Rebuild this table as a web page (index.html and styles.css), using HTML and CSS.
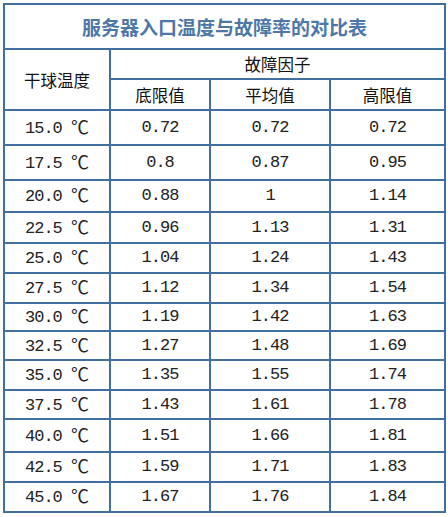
FILE: index.html
```html
<!DOCTYPE html>
<html lang="zh">
<head>
<meta charset="utf-8">
<title>服务器入口温度与故障率的对比表</title>
<link rel="stylesheet" href="styles.css">
</head>
<body>
<div class="sheet">
  <div class="cell title">服务器入口温度与故障率的对比表</div>
  <div class="cell head temp">干球温度</div>
  <div class="cell head factor">故障因子</div>
  <div class="cell head">底限值</div>
  <div class="cell head">平均值</div>
  <div class="cell head">高限值</div>

  <div class="cell num"><span class="val">15.0 <span class="deg">℃</span></span></div><div class="cell num">0.72</div><div class="cell num">0.72</div><div class="cell num">0.72</div>
  <div class="cell num"><span class="val">17.5 <span class="deg">℃</span></span></div><div class="cell num">0.8</div><div class="cell num">0.87</div><div class="cell num">0.95</div>
  <div class="cell num"><span class="val">20.0 <span class="deg">℃</span></span></div><div class="cell num">0.88</div><div class="cell num">1</div><div class="cell num">1.14</div>
  <div class="cell num"><span class="val">22.5 <span class="deg">℃</span></span></div><div class="cell num">0.96</div><div class="cell num">1.13</div><div class="cell num">1.31</div>
  <div class="cell num"><span class="val">25.0 <span class="deg">℃</span></span></div><div class="cell num">1.04</div><div class="cell num">1.24</div><div class="cell num">1.43</div>
  <div class="cell num"><span class="val">27.5 <span class="deg">℃</span></span></div><div class="cell num">1.12</div><div class="cell num">1.34</div><div class="cell num">1.54</div>
  <div class="cell num"><span class="val">30.0 <span class="deg">℃</span></span></div><div class="cell num">1.19</div><div class="cell num">1.42</div><div class="cell num">1.63</div>
  <div class="cell num"><span class="val">32.5 <span class="deg">℃</span></span></div><div class="cell num">1.27</div><div class="cell num">1.48</div><div class="cell num">1.69</div>
  <div class="cell num"><span class="val">35.0 <span class="deg">℃</span></span></div><div class="cell num">1.35</div><div class="cell num">1.55</div><div class="cell num">1.74</div>
  <div class="cell num"><span class="val">37.5 <span class="deg">℃</span></span></div><div class="cell num">1.43</div><div class="cell num">1.61</div><div class="cell num">1.78</div>
  <div class="cell num"><span class="val">40.0 <span class="deg">℃</span></span></div><div class="cell num">1.51</div><div class="cell num">1.66</div><div class="cell num">1.81</div>
  <div class="cell num"><span class="val">42.5 <span class="deg">℃</span></span></div><div class="cell num">1.59</div><div class="cell num">1.71</div><div class="cell num">1.83</div>
  <div class="cell num"><span class="val">45.0 <span class="deg">℃</span></span></div><div class="cell num">1.67</div><div class="cell num">1.76</div><div class="cell num">1.84</div>
</div>
</body>
</html>
```
FILE: styles.css
```css
html, body {
  margin: 0;
  padding: 0;
  background: #ffffff;
}

.sheet {
  display: grid;
  width: max-content;
  margin: 3px 0 0 3px;
  padding: 2px;
  gap: 2px;
  background: #41709e;
  grid-template-columns: 104px 98px 118px 113px;
  grid-template-rows: 43px 28px 29px 33px 33px 30px 29px 28px 28px 26px 27px 28px 27px 31px 28px 28px;
}

.cell {
  background: #ffffff;
  display: flex;
  align-items: center;
  justify-content: center;
  color: #111111;
  white-space: nowrap;
}

.title {
  grid-column: 1 / -1;
  font-family: "Noto Sans CJK SC", sans-serif;
  font-weight: 700;
  font-size: 19px;
  color: #4d77a6;
}

.head {
  font-family: "Noto Sans CJK SC", sans-serif;
  font-size: 16.5px;
}

.temp {
  grid-row: 2 / 4;
}

.factor {
  grid-column: 2 / -1;
}

.num {
  font-family: "Liberation Mono", monospace;
  font-size: 17px;
  letter-spacing: -1px;
  color: #222222;
  line-height: 20px;
}

.val {
  white-space: pre;
  line-height: 20px;
}

.deg {
  font-family: "Noto Sans CJK SC", sans-serif;
  font-size: 18px;
  letter-spacing: 0;
  line-height: 1;
  vertical-align: -1px;
}
```
